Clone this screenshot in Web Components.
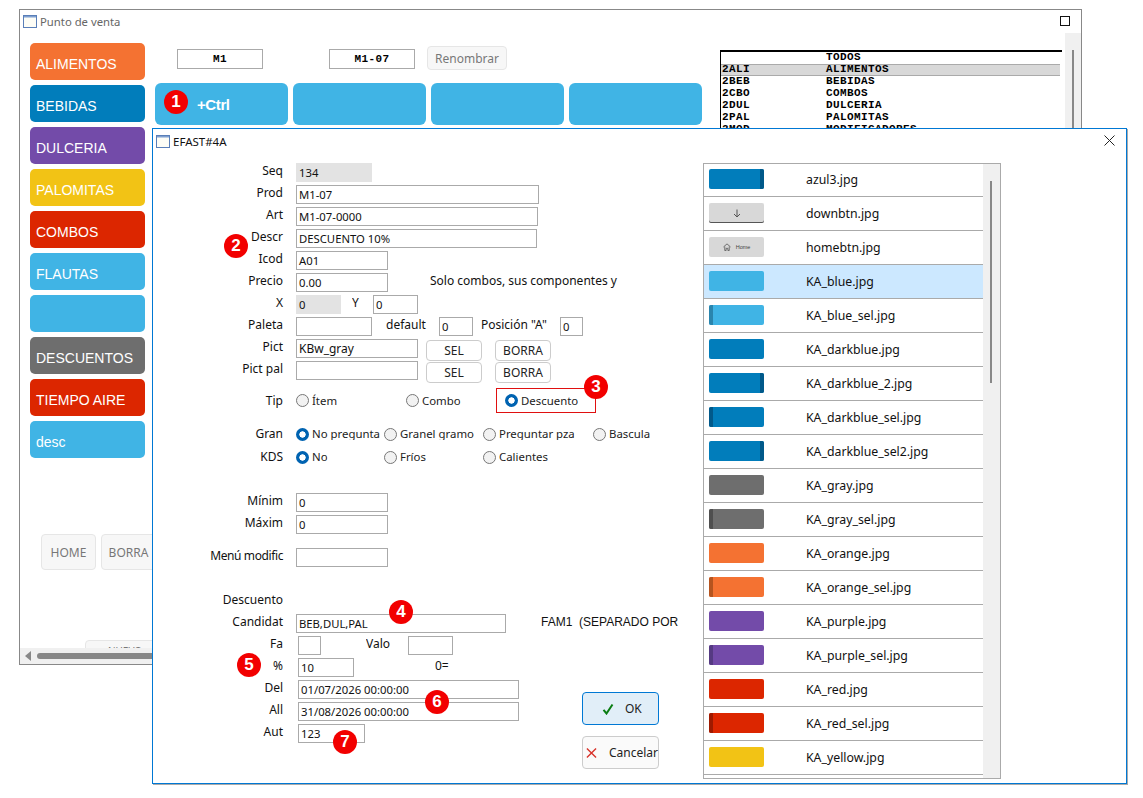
<!DOCTYPE html>
<html lang="es"><head><meta charset="utf-8"><title>Punto de venta</title>
<style>
html,body{margin:0;padding:0;background:#fff}
body{font:12px "Noto Sans",sans-serif;color:#111}
</style></head><body>
<pos-desktop>
  <app-window title="Punto de venta" style="left:19px;top:9px;width:1063px;height:656px">
    <side-col slot="side">
      <cat-button style="background:#f47232">ALIMENTOS</cat-button>
      <cat-button style="background:#017dbb">BEBIDAS</cat-button>
      <cat-button style="background:#734ba9">DULCERIA</cat-button>
      <cat-button style="background:#f2c315">PALOMITAS</cat-button>
      <cat-button style="background:#dc2600">COMBOS</cat-button>
      <cat-button style="background:#40b4e5">FLAUTAS</cat-button>
      <cat-button style="background:#40b4e5"></cat-button>
      <cat-button style="background:#6e6e6e">DESCUENTOS</cat-button>
      <cat-button style="background:#dc2600">TIEMPO AIRE</cat-button>
      <cat-button style="background:#40b4e5">desc</cat-button>
      <nav-row>
        <soft-button style="width:55px;height:36px">HOME</soft-button>
        <soft-button style="width:55px;height:36px">BORRA</soft-button>
      </nav-row>
      <soft-button style="width:80px;height:22px;margin:65px 0 0 55px;font-size:10px">NUEVO</soft-button>
    </side-col>
    <tool-bar slot="tools">
      <code-box style="margin-left:22px">M1</code-box>
      <code-box style="margin-left:66px">M1-07</code-box>
      <soft-button style="width:80px;height:24px;margin:-3px 0 0 12px;font-size:12px">Renombrar</soft-button>
    </tool-bar>
    <tile-row slot="tiles">
      <big-tile>+Ctrl</big-tile><big-tile></big-tile><big-tile></big-tile><big-tile></big-tile>
    </tile-row>
    <family-list slot="list">
      <family-item name="TODOS" plain></family-item>
      <family-item code="2ALI" name="ALIMENTOS" selected></family-item>
      <family-item code="2BEB" name="BEBIDAS"></family-item>
      <family-item code="2CBO" name="COMBOS"></family-item>
      <family-item code="2DUL" name="DULCERIA"></family-item>
      <family-item code="2PAL" name="PALOMITAS"></family-item>
      <family-item code="2MOD" name="MODIFICADORES"></family-item>
    </family-list>
  </app-window>

  <dialog-window title="EFAST#4A" style="left:152px;top:128px;width:975px;height:656px">
    <edit-form slot="form">
      <form-row label="Seq"><text-field gray style="width:76px">134</text-field></form-row>
      <form-row label="Prod"><text-field style="width:243px">M1-07</text-field></form-row>
      <form-row label="Art"><text-field style="width:242px">M1-07-0000</text-field></form-row>
      <form-row label="Descr"><text-field style="width:241px">DESCUENTO 10%</text-field></form-row>
      <form-row label="Icod"><text-field style="width:92px">A01</text-field></form-row>
      <form-row label="Precio"><text-field style="width:92px">0.00</text-field>
        <form-note style="margin-left:42px;width:188px">Solo combos, sus componentes y</form-note></form-row>
      <form-row label="X"><text-field gray style="width:45px">0</text-field>
        <form-note style="margin-left:11px;width:21px">Y</form-note>
        <text-field style="width:45px">0</text-field></form-row>
      <form-row label="Paleta"><text-field style="width:76px"></text-field>
        <form-note style="margin-left:14px;width:53px">default</form-note>
        <text-field style="width:34px">0</text-field>
        <form-note style="margin-left:8px;width:79px">Posición "A"</form-note>
        <text-field style="width:23px">0</text-field></form-row>
      <form-row label="Pict"><text-field style="width:122px;font-size:12px">KBw_gray</text-field>
        <soft-button form style="margin-left:8px">SEL</soft-button>
        <soft-button form style="margin-left:13px">BORRA</soft-button></form-row>
      <form-row label="Pict pal"><text-field style="width:122px"></text-field>
        <soft-button form style="margin-left:8px">SEL</soft-button>
        <soft-button form style="margin-left:13px">BORRA</soft-button></form-row>
      <form-row label="Tip" center style="margin-top:5px;height:25px">
        <radio-option style="width:110px">Ítem</radio-option>
        <radio-option style="width:90px">Combo</radio-option>
        <outlined-box><radio-option checked>Descuento</radio-option></outlined-box>
      </form-row>
      <form-row label="Gran" center style="margin-top:10px">
        <radio-option checked style="width:88px">No pregunta</radio-option>
        <radio-option style="width:99px">Granel gramo</radio-option>
        <radio-option style="width:110px">Preguntar pza</radio-option>
        <radio-option style="width:70px">Bascula</radio-option>
      </form-row>
      <form-row label="KDS" center style="margin-top:1px">
        <radio-option checked style="width:88px">No</radio-option>
        <radio-option style="width:99px">Fríos</radio-option>
        <radio-option style="width:110px">Calientes</radio-option>
      </form-row>
      <form-row label="Mínim" style="margin-top:25px"><text-field style="width:92px">0</text-field></form-row>
      <form-row label="Máxim"><text-field style="width:92px">0</text-field></form-row>
      <form-row label="Menú modific" style="margin-top:11px;letter-spacing:-.4px"><text-field style="width:92px"></text-field></form-row>
      <form-row label="Descuento" style="margin-top:22px"></form-row>
      <form-row label="Candidat"><text-field style="width:210px">BEB,DUL,PAL</text-field>
        <form-note arial style="margin-left:35px;width:140px">FAM1&nbsp; (SEPARADO POR</form-note></form-row>
      <form-row label="Fa" shift><text-field style="width:23px"></text-field>
        <form-note style="margin-left:45px;width:42px">Valo</form-note>
        <text-field style="width:45px"></text-field></form-row>
      <form-row label="%" shift><text-field style="width:56px">10</text-field>
        <form-note style="margin-left:81px;width:20px">0=</form-note></form-row>
      <form-row label="Del" shift><text-field style="width:221px">01/07/2026 00:00:00</text-field></form-row>
      <form-row label="All" shift><text-field style="width:221px">31/08/2026 00:00:00</text-field>
      </form-row>
      <form-row label="Aut" shift><text-field style="width:67px">123</text-field></form-row>
      <action-stack>
        <action-button primary><svg viewBox="0 0 12 12" width="12" height="12"><path d="M1.5 6.8 4.5 10.5 10.5 1.5" fill="none" stroke="#0a7d12" stroke-width="2"/></svg><span style="margin-left:11px">OK</span></action-button>
        <action-button><svg viewBox="0 0 12 12" width="12" height="12"><path d="M1 1 11 11M11 1 1 11" fill="none" stroke="#d8322a" stroke-width="1.5"/></svg><span style="margin-left:12px">Cancelar</span></action-button>
      </action-stack>
    </edit-form>
    <image-list slot="list">
      <image-row thumb="#017dbb" stripe="right" sc="#01598a">azul3.jpg</image-row>
      <image-row kind="down">downbtn.jpg</image-row>
      <image-row kind="home">homebtn.jpg</image-row>
      <image-row thumb="#40b4e5" selected>KA_blue.jpg</image-row>
      <image-row thumb="#40b4e5" stripe="left" sc="#2a85ad">KA_blue_sel.jpg</image-row>
      <image-row thumb="#017dbb">KA_darkblue.jpg</image-row>
      <image-row thumb="#017dbb" stripe="right" sc="#01598a">KA_darkblue_2.jpg</image-row>
      <image-row thumb="#017dbb" stripe="left" sc="#01598a">KA_darkblue_sel.jpg</image-row>
      <image-row thumb="#017dbb" stripe="right" sc="#01598a">KA_darkblue_sel2.jpg</image-row>
      <image-row thumb="#6e6e6e">KA_gray.jpg</image-row>
      <image-row thumb="#6e6e6e" stripe="left" sc="#4f4f4f">KA_gray_sel.jpg</image-row>
      <image-row thumb="#f47232">KA_orange.jpg</image-row>
      <image-row thumb="#f47232" stripe="left" sc="#b5541f">KA_orange_sel.jpg</image-row>
      <image-row thumb="#734ba9">KA_purple.jpg</image-row>
      <image-row thumb="#734ba9" stripe="left" sc="#553a82">KA_purple_sel.jpg</image-row>
      <image-row thumb="#dc2600">KA_red.jpg</image-row>
      <image-row thumb="#dc2600" stripe="left" sc="#9e1a00">KA_red_sel.jpg</image-row>
      <image-row thumb="#f2c315">KA_yellow.jpg</image-row>
    </image-list>
  </dialog-window>

  <call-out style="left:164px;top:90px">1</call-out>
  <call-out style="left:224px;top:234px">2</call-out>
  <call-out style="left:584px;top:375px">3</call-out>
  <call-out style="left:389px;top:600px">4</call-out>
  <call-out style="left:237px;top:653px">5</call-out>
  <call-out style="left:425px;top:690px">6</call-out>
  <call-out style="left:333px;top:730px">7</call-out>
</pos-desktop>
<script>
const ICON=`<svg width="14" height="13" viewBox="0 0 14 13" style="display:block"><rect x=".5" y=".5" width="13" height="12" fill="#fdfdf6" stroke="#5a7fb8"/><rect x="1" y="1" width="12" height="1.5" fill="#7f9fd0"/></svg>`;
function def(name,html,setup){
  customElements.define(name,class extends HTMLElement{
    constructor(){super();const r=this.attachShadow({mode:'open'});r.innerHTML=html;}
    connectedCallback(){if(setup)setup(this,this.shadowRoot);}
  });
}
def('pos-desktop',`<style>:host{display:block;position:relative;width:1143px;height:798px;overflow:hidden;background:#fff}</style><slot></slot>`);

def('app-window',`<style>
:host{display:flex;flex-direction:column;position:absolute;box-sizing:border-box;border:1px solid #888;background:#fff;overflow:hidden}
.t{height:23px;flex:none;display:flex;align-items:center;padding-left:3px;color:#666;font:11.3px "Noto Sans",sans-serif;position:relative}
.t b{font-weight:400;margin-left:3px}
.max{margin-left:auto;margin-right:11px;width:8px;height:8px;border:1.5px solid #111;margin-top:-1px}
.b{flex:1;display:flex;min-height:0;padding-left:10px;gap:10px;overflow:hidden}
.m{flex:none;width:547px;display:flex;flex-direction:column}
.l{flex:none;margin-left:8px;width:345px;padding-top:17px;box-sizing:border-box}
.sb{flex:none;width:16px;margin-left:-10px;background:#f0f0f0;display:flex;justify-content:center;padding-top:17px}
.sb i{display:block;width:2px;background:#888;height:100%}
.h{height:16px;flex:none;background:#f0f0f0;display:flex;align-items:center;padding-left:5px;gap:6px;position:relative}
.h s{border:solid transparent;border-width:5px 6px 5px 0;border-right-color:#888}
.h i{display:block;width:360px;height:6px;border-radius:3px;background:#888}
</style>
<div class="t">${ICON}<b></b><span class="max"></span></div>
<div class="b"><slot name="side"></slot>
<div class="m"><slot name="tools"></slot><slot name="tiles"></slot></div>
<div class="l"><slot name="list"></slot></div>
<div class="sb"><i></i></div></div>
<div class="h"><s></s><i></i></div>`,(h,r)=>{r.querySelector('b').textContent=h.getAttribute('title');h.removeAttribute('title')});

def('side-col',`<style>:host{display:flex;flex-direction:column;gap:5px;width:115px;flex:none;padding-top:10px;box-sizing:border-box}</style><slot></slot>`);
def('cat-button',`<style>:host{display:flex;align-items:center;flex:none;box-sizing:border-box;height:37px;border-radius:5px;padding:4px 0 0 6px;color:#fff;font:14px "Liberation Sans",sans-serif}</style><slot></slot>`);
def('nav-row',`<style>:host{display:flex;gap:5px;margin:71px 0 0 11px;flex:none;width:200px}</style><slot></slot>`);
def('soft-button',`<style>:host{display:flex;flex:none;align-items:center;justify-content:center;box-sizing:border-box;background:#f7f7f7;border:1px solid #e6e6e6;border-radius:4px;color:#777;font:12px "Noto Sans",sans-serif}
:host([form]){width:56px;height:21px;margin-top:1px;border-color:#ccc;background:#fff;color:#222;border-radius:4px}</style><slot></slot>`);
def('tool-bar',`<style>:host{display:flex;height:50px;padding-top:16px;box-sizing:border-box;flex:none}</style><slot></slot>`);
def('code-box',`<style>:host{display:flex;align-items:center;justify-content:center;box-sizing:border-box;width:86px;height:20px;border:1px solid #aaa;font:bold 11px "Liberation Mono",monospace;letter-spacing:.4px;color:#000}</style><slot></slot>`);
def('tile-row',`<style>:host{display:flex;gap:5px;flex:none}</style><slot></slot>`);
def('big-tile',`<style>:host{display:flex;align-items:center;flex:none;box-sizing:border-box;width:133px;height:42px;border-radius:6px;background:#40b4e5;padding-left:42px;color:#fff;font:bold 15px "Liberation Sans",sans-serif;letter-spacing:-.4px}</style><slot></slot>`);
def('family-list',`<style>:host{display:block;border-top:2px solid #000;border-left:1px solid #000;height:90px;width:342px;box-sizing:border-box;overflow:hidden}</style><slot></slot>`);
def('family-item',`<style>:host{display:flex;height:12px;box-sizing:border-box;font:bold 11px/11px "Liberation Mono",monospace;letter-spacing:.4px;color:#000;width:339px}
:host([selected]){background:#d8d8d8;box-shadow:inset 0 1px #aaa,inset 0 -1px #aaa}
.c{width:105px;padding-left:1px;flex:none;box-sizing:border-box}</style><span class="c"></span><span class="n"></span>`,(h,r)=>{r.querySelector('.c').textContent=h.getAttribute('code')||'';r.querySelector('.n').textContent=h.getAttribute('name')});

def('dialog-window',`<style>
:host{display:flex;flex-direction:column;position:absolute;box-sizing:border-box;border:1px solid #0078d4;background:#fff;box-shadow:1px 1px 0 #aaa;overflow:hidden}
.t{height:34px;flex:none;display:flex;align-items:center;padding:0 0 10px 3px;box-sizing:border-box;font:11.5px "Noto Sans",sans-serif;color:#111}
.t b{font-weight:400;margin-left:3px}
.t svg.x{margin-left:auto;margin-right:11px;margin-top:-2px}
.b{display:flex;flex:1;min-height:0}
</style>
<div class="t">${ICON}<b></b><svg class="x" width="11" height="11" viewBox="0 0 11 11"><path d="M.5.5 10.5 10.5M10.5.5.5 10.5" stroke="#222" fill="none"/></svg></div>
<div class="b"><slot name="form"></slot><slot name="list"></slot></div>`,(h,r)=>{r.querySelector('b').textContent=h.getAttribute('title');h.removeAttribute('title')});

def('edit-form',`<style>:host{display:block;position:relative;width:550px;flex:none;font:12px "Noto Sans",sans-serif;color:#111}</style><slot></slot>`);
def('form-row',`<style>
:host{display:flex;height:22px;align-items:flex-start;flex:none}
:host([center]){align-items:center}
.l{width:130px;flex:none;text-align:right;line-height:16px;margin-right:13px;color:#111}
:host([center]) .l{line-height:18px}
.c{display:flex;align-items:flex-start;flex:1;letter-spacing:0}
:host([center]) .c{align-items:center}
:host([shift]) .c{margin-left:2px}
</style><span class="l"></span><div class="c"><slot></slot></div>`,(h,r)=>{r.querySelector('.l').textContent=h.getAttribute('label')});
def('text-field',`<style>:host{display:block;flex:none;box-sizing:border-box;height:19px;border:1px solid #aaa;padding:0 2px;font:11.3px/18px "Noto Sans",sans-serif;color:#111;white-space:nowrap;overflow:hidden;background:#fff}
:host([gray]){background:#e3e3e3;border-color:#e3e3e3}</style><slot></slot>`);
def('form-note',`<style>:host{display:block;flex:none;line-height:16px;white-space:nowrap;overflow:hidden;color:#111}
:host([arial]){font:12px/16px "Liberation Sans",sans-serif}</style><slot></slot>`);
def('radio-option',`<style>:host{display:flex;flex:none;align-items:center;gap:3px;white-space:nowrap;overflow:hidden;color:#222;font-size:11.4px}
i{display:block;flex:none;box-sizing:border-box;width:13px;height:13px;border-radius:50%;border:1px solid #777;background:#f2f2f2}
:host([checked]) i{border:none;background:radial-gradient(circle at center,#fff 0 2.9px,#0063b1 3.4px)}
span{display:block;line-height:18px;clip-path:inset(-3px 0 3px 0)}</style><i></i><span><slot></slot></span>`);
def('outlined-box',`<style>:host{display:flex;align-items:center;box-sizing:border-box;width:100px;height:25px;border:1px solid #e01010;padding-left:8px}</style><slot></slot>`);
def('action-stack',`<style>:host{position:absolute;left:429px;top:529px;display:flex;flex-direction:column;gap:11px}</style><slot></slot>`);
def('action-button',`<style>:host{display:flex;align-items:center;box-sizing:border-box;width:77px;height:33px;border:1px solid #ccc;border-radius:4px;background:#fafafa;padding-left:3px;color:#222;font:12px "Noto Sans",sans-serif}
:host([primary]){background:#e1eef8;border:1px solid #0078d4;padding-left:19px}</style><slot></slot>`);
def('image-list',`<style>:host{display:block;position:relative;box-sizing:border-box;width:298px;height:616px;flex:none;border:1px solid #aaa;overflow:hidden;background:#fff}
.w{width:280px;height:100%;overflow:hidden}
.s{position:absolute;top:0;right:0;bottom:0;width:17px;background:#f0f0f0}
.s i{position:absolute;left:7px;top:17px;width:2px;height:202px;background:#888}</style><div class="w"><slot></slot></div><div class="s"><i></i></div>`);
def('image-row',`<style>:host{display:flex;align-items:center;box-sizing:border-box;height:34px;border-bottom:1px solid #aaa;padding-left:5px;font:12.3px "Noto Sans",sans-serif;color:#111}
:host(:first-child){margin-top:-1px}
:host([selected]){background:#cce8ff}
.th{position:relative;flex:none;width:55px;height:20px;border-radius:2px;margin:0 42px 1px 0;overflow:hidden;display:flex;align-items:center;justify-content:center;gap:5px;font:5.5px "Liberation Sans",sans-serif;color:#444}
.st{position:absolute;top:0;bottom:0;width:4px}</style>
<div class="th"></div><slot></slot>`,(h,r)=>{
  const t=r.querySelector('.th'),k=h.getAttribute('kind');
  if(k==='down'){t.style.cssText='background:#d8d8d8;box-shadow:inset 0 -1px #555';t.innerHTML='<svg width="8" height="9" viewBox="0 0 8 9"><path d="M4 .5V8M1 5l3 3 3-3" fill="none" stroke="#555"/></svg>';return}
  if(k==='home'){t.style.background='#d8d8d8';t.innerHTML='<svg width="8" height="8" viewBox="0 0 9 9"><path d="M.5 4.5 4.5 1l4 3.5M2 4v4.5h1.5V6h2v2.5H7V4" fill="none" stroke="#555" stroke-width=".9"/></svg><span>Home</span>';return}
  t.style.background=h.getAttribute('thumb');
  const s=h.getAttribute('stripe');
  if(s){const e=document.createElement('div');e.className='st';e.style[s]='0';e.style.background=h.getAttribute('sc');t.append(e)}
});
def('call-out',`<style>:host{position:absolute;display:flex;align-items:center;justify-content:center;width:24px;height:24px;border-radius:50%;background:#f20000;color:#fff;font:bold 17px "Liberation Sans",sans-serif}</style><slot></slot>`);
</script>
</body></html>
